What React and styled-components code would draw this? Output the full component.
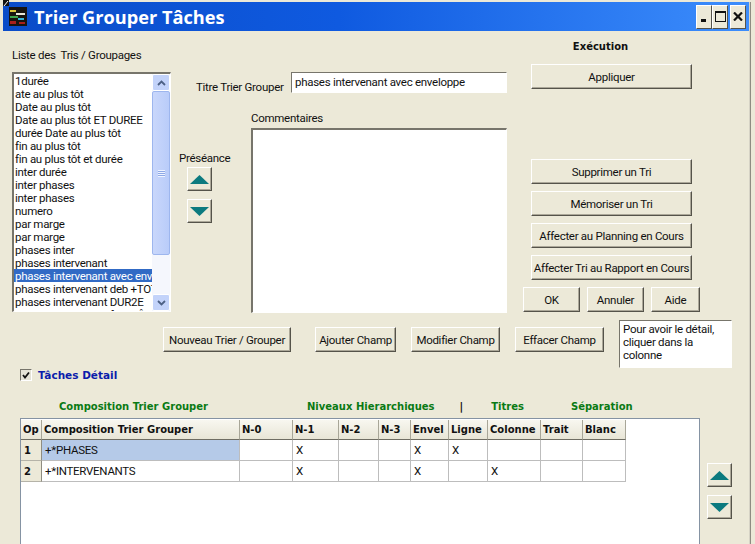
import React from 'react';
import styled, { createGlobalStyle } from 'styled-components';

const face = '#ece9d8';
const green = '#0a7a14';
const teal = '#0b7a7f';
const ui = 'Roboto, "Liberation Sans", Arial, sans-serif';

const Global = createGlobalStyle`
  html, body {
    margin: 0;
    width: 755px;
    height: 544px;
    overflow: hidden;
    background: ${face};
  }
`;

const Page = styled.div`
  position: relative;
  width: 755px;
  height: 544px;
  overflow: hidden;
  box-sizing: border-box;
  padding: 2px 0 0 3px;
  font-family: ${ui};
  font-size: 11.5px;
  letter-spacing: -0.28px;
  color: #111;
  background: ${face};
`;
const Cursor = styled.svg`
  position: absolute;
  left: 0;
  top: 0;
`;
const Window = styled.div`
  width: 746px;
  height: 560px;
  box-shadow: 1px 0 0 #d6d3c6, 2px 0 0 #8e8c82;
`;
const TitleBar = styled.div`
  height: 29px;
  display: flex;
  align-items: center;
  padding: 0 3px 0 6px;
  background: linear-gradient(90deg, #0a4cc8 0%, #0f5ae0 45%, #3c8dfc 100%);
`;
const AppIcon = styled.svg`
  flex: none;
  margin-right: 7px;
`;
const TitleText = styled.div`
  flex: 1;
  font-family: "Open Sans", sans-serif;
  font-size: 18.2px;
  letter-spacing: 0;
  font-weight: 700;
  color: #fff;
`;
const CapButton = styled.div`
  width: ${p => p.$w}px;
  height: 24px;
  margin-left: ${p => p.$gap || 0}px;
  display: flex;
  align-items: center;
  justify-content: center;
  box-sizing: border-box;
  background: ${face};
  border-style: solid;
  border-width: 1px;
  border-color: #fff #55534a #55534a #fff;
`;

const Body = styled.div`
  padding-left: 9px;
`;
const TopRow = styled.div`
  display: flex;
  height: 290px;
`;
const ListColumn = styled.div`
  width: 159px;
`;
const ListLabel = styled.div`
  height: 14px;
  margin: 17px 0 10px;
  line-height: 14px;
`;
const sunken = `
  box-sizing: border-box;
  background: #fff;
  border-style: solid;
  border-width: 1px;
  border-color: #77756b #fff #fff #77756b;
`;
const ListBox = styled.div`
  ${sunken}
  height: 240px;
  display: flex;
  overflow: hidden;
  border-width: 2px 1px 1px 2px;
`;
const Items = styled.div`
  width: 138px;
  flex: none;
  overflow: hidden;
`;
const Item = styled.div`
  height: 13px;
  line-height: 14px;
  padding-left: 1px;
  white-space: nowrap;
  overflow: hidden;
  background: ${p => (p.$selected ? '#316ac5' : 'transparent')};
  color: ${p => (p.$selected ? '#fff' : '#111')};
`;
const ScrollBar = styled.div`
  flex: 1;
  display: flex;
  flex-direction: column;
  background: #f5f7fd;
`;
const ScrollButton = styled.div`
  height: 17px;
  flex: none;
  display: flex;
  align-items: center;
  justify-content: center;
  border-radius: 2px;
  border: 1px solid #fff;
  box-sizing: border-box;
  background: #c3d3fa;
`;
const Thumb = styled.div`
  height: 164px;
  flex: none;
  display: flex;
  align-items: center;
  justify-content: center;
  box-sizing: border-box;
  border: 1px solid #9db6ee;
  border-radius: 2px;
  background: linear-gradient(90deg, #c9d7fb, #b9ccf9);
`;
const Track = styled.div`
  flex: 1;
`;
const Grip = styled.div`
  width: 7px;
  height: 7px;
  background: repeating-linear-gradient(180deg, #eef3ff 0 1px, #8ea9e6 1px 2px);
`;

const MidColumn = styled.div`
  width: 328px;
  margin-left: 8px;
`;
const TitleRow = styled.div`
  display: flex;
  align-items: center;
  height: 21px;
  margin: 41px 0 0 17px;
`;
const TitleLabel = styled.div`
  width: 95px;
  padding-top: 8px;
`;
const TitleInput = styled.div`
  ${sunken}
  flex: 1;
  height: 21px;
  line-height: 18px;
  padding-left: 3px;
`;
const MidRow = styled.div`
  display: flex;
  margin-top: 18px;
`;
const OrderColumn = styled.div`
  width: 72px;
  padding-top: 40px;
`;
const OrderLabel = styled.div`
  height: 14px;
  line-height: 14px;
  margin-bottom: 2px;
`;
const ArrowStack = styled.div`
  display: flex;
  flex-direction: column;
  gap: 8px;
  margin-left: ${p => p.$indent}px;
`;
const ArrowButton = styled.div`
  width: 25px;
  height: 24px;
  display: flex;
  align-items: center;
  justify-content: center;
  box-sizing: border-box;
  background: ${face};
  border-style: solid;
  border-width: 1px;
  border-color: #fff #55534a #55534a #fff;
  box-shadow: inset -1px -1px 0 #aca899;
`;
const CommentColumn = styled.div`
  flex: 1;
`;
const CommentLabel = styled.div`
  height: 14px;
  line-height: 14px;
  margin-bottom: 3px;
`;
const CommentArea = styled.div`
  ${sunken}
  height: 185px;
  border-width: 2px 1px 1px 2px;
`;

const RightColumn = styled.div`
  width: 177px;
  margin-left: 16px;
  display: flex;
  flex-direction: column;
  align-items: flex-start;
`;
const ExecLabel = styled.div`
  width: 139px;
  margin: 9px 0 10px 8px;
  height: 14px;
  line-height: 14px;
  text-align: center;
  font-family: "DejaVu Sans", sans-serif;
  font-size: 10px;
  letter-spacing: 0;
  font-weight: 700;
`;
const Button = styled.div`
  width: ${p => p.$w}px;
  height: ${p => p.$h || 25}px;
  flex: none;
  display: flex;
  align-items: center;
  justify-content: center;
  box-sizing: border-box;
  white-space: nowrap;
  background: ${face};
  border-style: solid;
  border-width: 1px;
  border-color: #fff #55534a #55534a #fff;
  box-shadow: inset -1px -1px 0 #aca899;
`;
const ButtonStack = styled.div`
  display: flex;
  flex-direction: column;
  gap: 7px;
  margin: ${p => p.$top}px 0 0 8px;
`;
const OkRow = styled.div`
  display: flex;
  gap: 7px;
  margin-top: 7px;
`;

const ActionRow = styled.div`
  display: flex;
  align-items: flex-start;
  height: 48px;
  margin-top: -1px;
  padding-left: 151px;
`;
const ActionButton = styled(Button)`
  margin: 7px ${p => p.$after}px 0 0;
`;
const Note = styled.div`
  ${sunken}
  width: 113px;
  height: 48px;
  padding: 2px 0 0 3px;
  line-height: 13px;
`;

const DetailRow = styled.div`
  display: flex;
  align-items: center;
  height: 14px;
  padding-left: 8px;
`;
const Check = styled.div`
  ${sunken}
  background: #e4e2d6;
  width: 12px;
  height: 12px;
  display: flex;
  align-items: center;
  justify-content: center;
  margin-right: 6px;
`;
const DetailLabel = styled.div`
  font-family: "DejaVu Sans", sans-serif;
  font-size: 10.5px;
  letter-spacing: 0;
  font-weight: 700;
  color: #0b1cab;
`;
const GroupHeads = styled.div`
  display: flex;
  height: 14px;
  margin-top: 18px;
  padding-left: 47px;
`;
const GroupHead = styled.div`
  margin-right: ${p => p.$after}px;
  font-family: "DejaVu Sans", sans-serif;
  font-size: 10px;
  letter-spacing: 0;
  line-height: 14px;
  font-weight: 700;
  white-space: nowrap;
  color: ${p => p.$dark ? '#111' : green};
`;
const GridRow = styled.div`
  display: flex;
  margin: 4px 0 0 8px;
`;
const GridFrame = styled.div`
  width: 680px;
  height: 140px;
  flex: none;
  box-sizing: border-box;
  padding: 1px 0 0 0;
  background: #fff;
  border: 1px solid #8593a3;
  border-width: 1px 1px 0 1px;
`;
const Table = styled.div`
  display: grid;
  grid-template-columns: 21px 198px 53px 46px 40px 32px 38px 39px 53px 42px 43px;
  grid-template-rows: 20px;
  grid-auto-rows: 21px;
  width: max-content;
`;
const HeadCell = styled.div`
  height: 20px;
  box-sizing: border-box;
  padding-left: 2px;
  display: flex;
  align-items: center;
  white-space: nowrap;
  overflow: hidden;
  font-family: "DejaVu Sans", sans-serif;
  font-size: 10px;
  letter-spacing: 0;
  font-weight: 700;
  background: linear-gradient(180deg, #f8f7f0, #e8e5d6);
  border-right: 1px solid #a8a698;
  border-bottom: 1px solid #6f6d63;
`;
const RowHead = styled(HeadCell)`
  height: 21px;
  padding-left: 3px;
  background: ${face};
  border-bottom: 1px solid #b5b3a8;
  border-right: 1px solid #8f8d82;
`;
const Cell = styled.div`
  height: 21px;
  box-sizing: border-box;
  padding-left: 3px;
  line-height: 20px;
  background: ${p => (p.$active ? '#b5cae8' : '#fff')};
  border-right: 1px solid #bdbdbd;
  border-bottom: 1px solid #bdbdbd;
`;
const SideArrows = styled.div`
  margin-left: 7px;
  padding-top: 45px;
`;

const Up = () => (
  <svg width="21" height="11" viewBox="0 0 21 11"><polygon points="10.5,1 20,10 1,10" fill={teal} /></svg>
);
const Down = () => (
  <svg width="21" height="11" viewBox="0 0 21 11"><polygon points="1,1 20,1 10.5,10" fill={teal} /></svg>
);
const Chevron = ({ down }) => (
  <svg width="9" height="6" viewBox="0 0 9 6">
    <polyline points={down ? '1,1 4.5,4.5 8,1' : '1,5 4.5,1.5 8,5'} fill="none" stroke="#4d6185" strokeWidth="1.8" />
  </svg>
);

const items = [
  '1durée', 'ate au plus tôt', 'Date au plus tôt', 'Date au plus tôt ET DUREE',
  'durée Date au plus tôt', 'fin au plus tôt', 'fin au plus tôt et durée', 'inter durée',
  'inter phases', 'inter phases', 'numero', 'par marge', 'par marge', 'phases inter',
  'phases intervenant', 'phases intervenant avec enveloppe', 'phases intervenant deb +TOT',
  'phases intervenant DUR2E', 'phases intervenant fin +TÔT',
];
const headers = ['Op', 'Composition Trier Grouper', 'N-0', 'N-1', 'N-2', 'N-3', 'Envel', 'Ligne', 'Colonne', 'Trait', 'Blanc'];
const rows = [
  ['1', '+*PHASES', '', 'X', '', '', 'X', 'X', '', '', ''],
  ['2', '+*INTERVENANTS', '', 'X', '', '', 'X', '', 'X', '', ''],
];

export default function App() {
  return (
    <Page>
      <Global />
      <Cursor width="9" height="7" viewBox="0 0 9 7">
        <rect x="3" y="0" width="6" height="6" fill="#111" />
        <line x1="4" y1="6" x2="8" y2="1" stroke="#fff" strokeWidth="1" />
      </Cursor>
      <Window>
        <TitleBar>
          <AppIcon width="18" height="19" viewBox="0 0 18 19">
            <rect width="18" height="19" fill="#181410" />
            <rect x="1" y="3" width="6" height="2" fill="#d9c23a" />
            <rect x="7" y="6" width="9" height="2" fill="#e8e6d8" />
            <rect x="1" y="9" width="8" height="2" fill="#3fa34d" />
            <rect x="9" y="11" width="6" height="2" fill="#38b6d8" />
            <rect x="1" y="14" width="6" height="3" fill="#a8201c" />
            <rect x="10" y="15" width="6" height="2" fill="#a8201c" />
          </AppIcon>
          <TitleText>Trier Grouper Tâches</TitleText>
          <CapButton $w={16}>
            <svg width="8" height="10" viewBox="0 0 8 10"><rect x="1" y="7" width="5" height="3" fill="#111" /></svg>
          </CapButton>
          <CapButton $w={16}>
            <svg width="11" height="11" viewBox="0 0 11 11"><rect x=".5" y="1" width="10" height="9.5" fill="none" stroke="#111" /><rect x="0" y="0" width="11" height="2" fill="#111" /></svg>
          </CapButton>
          <CapButton $w={16} $gap={2}>
            <svg width="10" height="9" viewBox="0 0 10 9"><path d="M1 .5 L9 8.5 M9 .5 L1 8.5" stroke="#111" strokeWidth="2.2" /></svg>
          </CapButton>
        </TitleBar>
        <Body>
          <TopRow>
            <ListColumn>
              <ListLabel>Liste des&nbsp; Tris / Groupages</ListLabel>
              <ListBox>
                <Items>
                  {items.map((t, i) => <Item key={i} $selected={i === 15}>{t}</Item>)}
                </Items>
                <ScrollBar>
                  <ScrollButton><Chevron /></ScrollButton>
                  <Thumb><Grip /></Thumb>
                  <Track />
                  <ScrollButton><Chevron down /></ScrollButton>
                </ScrollBar>
              </ListBox>
            </ListColumn>
            <MidColumn>
              <TitleRow>
                <TitleLabel>Titre Trier Grouper</TitleLabel>
                <TitleInput>phases intervenant avec enveloppe</TitleInput>
              </TitleRow>
              <MidRow>
                <OrderColumn>
                  <OrderLabel>Préséance</OrderLabel>
                  <ArrowStack $indent={8}>
                    <ArrowButton><Up /></ArrowButton>
                    <ArrowButton><Down /></ArrowButton>
                  </ArrowStack>
                </OrderColumn>
                <CommentColumn>
                  <CommentLabel>Commentaires</CommentLabel>
                  <CommentArea />
                </CommentColumn>
              </MidRow>
            </MidColumn>
            <RightColumn>
              <ExecLabel>Exécution</ExecLabel>
              <ButtonStack $top={0}>
                <Button $w={161}>Appliquer</Button>
              </ButtonStack>
              <ButtonStack $top={70}>
                <Button $w={161}>Supprimer un Tri</Button>
                <Button $w={161}>Mémoriser un Tri</Button>
                <Button $w={161}>Affecter au Planning en Cours</Button>
                <Button $w={161}>Affecter Tri au Rapport en Cours</Button>
              </ButtonStack>
              <OkRow>
                <Button $w={57}>OK</Button>
                <Button $w={57}>Annuler</Button>
                <Button $w={49}>Aide</Button>
              </OkRow>
            </RightColumn>
          </TopRow>
          <ActionRow>
            <ActionButton $w={128} $after={24}>Nouveau Trier / Grouper</ActionButton>
            <ActionButton $w={81} $after={15}>Ajouter Champ</ActionButton>
            <ActionButton $w={89} $after={15}>Modifier Champ</ActionButton>
            <ActionButton $w={89} $after={15}>Effacer Champ</ActionButton>
            <Note>Pour avoir le détail, cliquer dans la colonne</Note>
          </ActionRow>
          <DetailRow>
            <Check>
              <svg width="8" height="8" viewBox="0 0 8 8"><polyline points="1,4 3,6.5 7,1.5" fill="none" stroke="#111" strokeWidth="1.8" /></svg>
            </Check>
            <DetailLabel>Tâches Détail</DetailLabel>
          </DetailRow>
          <GroupHeads>
            <GroupHead $after={99}>Composition Trier Grouper</GroupHead>
            <GroupHead $after={25}>Niveaux Hierarchiques</GroupHead>
            <GroupHead $after={28} $dark>|</GroupHead>
            <GroupHead $after={47}>Titres</GroupHead>
            <GroupHead $after={0}>Séparation</GroupHead>
          </GroupHeads>
          <GridRow>
            <GridFrame>
              <Table>
                {headers.map(h => <HeadCell key={h}>{h}</HeadCell>)}
                {rows.map((row, r) => row.map((v, c) => (
                  c === 0
                    ? <RowHead key={c + '-' + r}>{v}</RowHead>
                    : <Cell key={c + '-' + r} $active={r === 0 && c === 1}>{v}</Cell>
                )))}
              </Table>
            </GridFrame>
            <SideArrows>
              <ArrowStack $indent={0}>
                <ArrowButton><Up /></ArrowButton>
                <ArrowButton><Down /></ArrowButton>
              </ArrowStack>
            </SideArrows>
          </GridRow>
        </Body>
      </Window>
    </Page>
  );
}
